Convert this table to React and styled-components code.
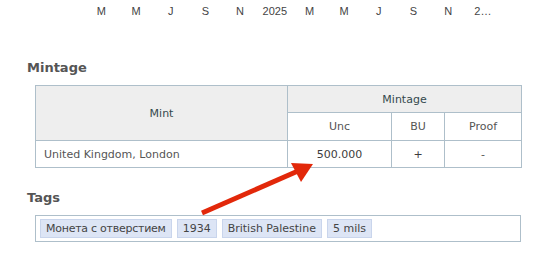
import React from "react";
import styled, { createGlobalStyle } from "styled-components";

const GlobalStyle = createGlobalStyle`
  body {
    margin: 0;
    background: #fff;
    font-family: "DejaVu Sans", Verdana, sans-serif;
  }
`;

const Page = styled.div`
  position: relative;
  width: 548px;
  height: 271px;
  overflow: hidden;
`;

const Axis = styled.div`
  position: relative;
  height: 22px;
  display: flex;
  padding-left: 84px;
  font-family: "Liberation Sans", Arial, sans-serif;
  font-size: 11px;
  color: #444;
`;

const AxisCut = styled.span`
  position: absolute;
  left: 62px;
  top: -10px;
  font-size: 11px;
  color: #666;
`;

const Tick = styled.span`
  width: 34.7px;
  flex: none;
  text-align: center;
  line-height: 22px;
`;

const Section = styled.section`
  padding: 0 27px;
`;

const Heading = styled.h2`
  margin: 0;
  font-size: 13px;
  font-weight: bold;
  color: #555;
  line-height: 16px;
  padding-top: ${(p) => p.$top}px;
`;

const Table = styled.table`
  margin: 9px 0 0 8px;
  width: 487px;
  border-collapse: collapse;
  font-size: 11px;
  color: #555;
`;

const Th = styled.th`
  border: 1px solid #aebfca;
  background: ${(p) => (p.$light ? "#fff" : "#eeeeee")};
  color: ${(p) => (p.$light ? "#555" : "#34494d")};
  font-weight: normal;
  height: ${(p) => p.$h || 26}px;
  padding: 0;
  text-align: center;
`;

const Td = styled.td`
  border: 1px solid #aebfca;
  height: 26px;
  padding: 0 8px;
  text-align: ${(p) => (p.$left ? "left" : "center")};
  color: ${(p) => (p.$dark ? "#3c3c3c" : "#555")};
`;

const TagBox = styled.div`
  margin: 9px 0 0 8px;
  width: 476px;
  border: 1px solid #aebfca;
  padding: 3px 4px;
  display: flex;
  gap: 5px;
`;

const Tag = styled.span`
  background: #dde5f5;
  border: 1px solid #c9d5ec;
  color: #444;
  font-size: 11px;
  line-height: 17px;
  padding: 0 5px;
  letter-spacing: ${(p) => (p.$tight ? "-0.25px" : "0")};
`;

const Arrow = styled.svg`
  position: absolute;
  left: 0;
  top: 0;
  pointer-events: none;
`;

const ticks = ["M", "M", "J", "S", "N", "2025", "M", "M", "J", "S", "N", "2…"];
const tags = ["Монета с отверстием", "1934", "British Palestine", "5 mils"];

export default function App() {
  return (
    <Page>
      <GlobalStyle />
      <Axis>
        <AxisCut>50</AxisCut>
        {ticks.map((t, i) => (
          <Tick key={i}>{t}</Tick>
        ))}
      </Axis>

      <Section>
        <Heading $top={38}>Mintage</Heading>
        <Table>
          <colgroup>
            <col style={{ width: 252 }} />
            <col style={{ width: 104 }} />
            <col style={{ width: 53 }} />
            <col style={{ width: 77 }} />
          </colgroup>
          <thead>
            <tr>
              <Th rowSpan={2}>Mint</Th>
              <Th colSpan={3}>Mintage</Th>
            </tr>
            <tr>
              <Th $light $h={27}>Unc</Th>
              <Th $light $h={27}>BU</Th>
              <Th $light $h={27}>Proof</Th>
            </tr>
          </thead>
          <tbody>
            <tr>
              <Td $left>United Kingdom, London</Td>
              <Td $dark>500.000</Td>
              <Td $dark>+</Td>
              <Td>-</Td>
            </tr>
          </tbody>
        </Table>

        <Heading $top={22}>Tags</Heading>
        <TagBox>
          {tags.map((t, i) => (
            <Tag key={t} $tight={i === 0}>{t}</Tag>
          ))}
        </TagBox>
      </Section>

      <Arrow width="548" height="271" viewBox="0 0 548 271">
        <line x1="202" y1="213" x2="298" y2="171" stroke="#e2280a" strokeWidth="5" />
        <polygon points="313,164 291,163 301,182" fill="#e2280a" />
      </Arrow>
    </Page>
  );
}
